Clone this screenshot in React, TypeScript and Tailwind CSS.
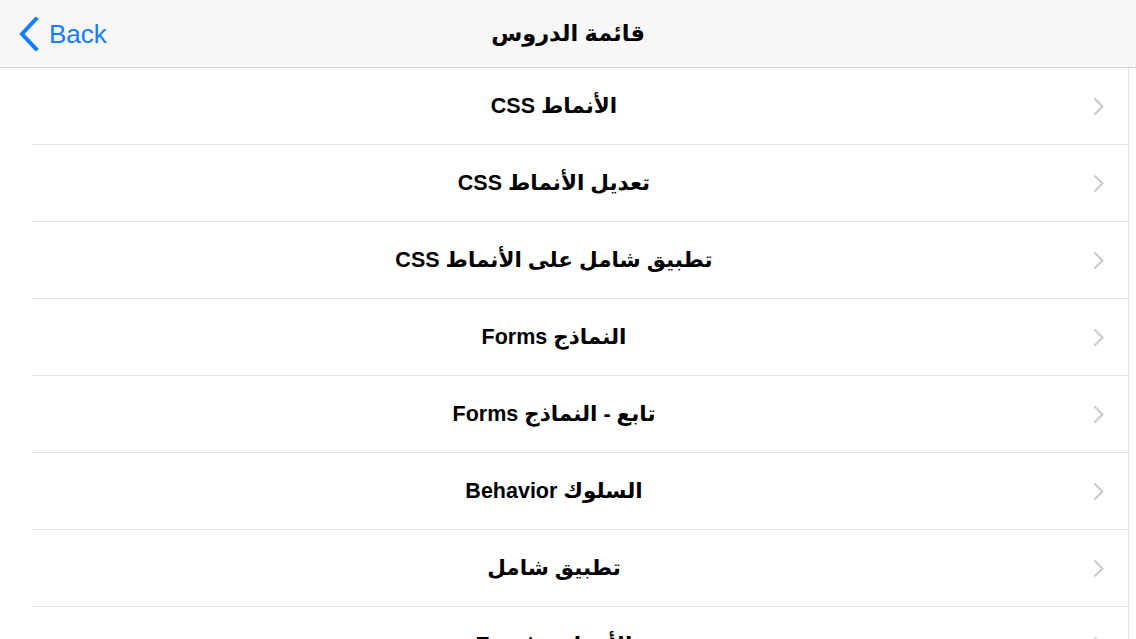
const LESSONS = [
  'الأنماط CSS',
  'تعديل الأنماط CSS',
  'تطبيق شامل على الأنماط CSS',
  'النماذج Forms',
  'تابع - النماذج Forms',
  'السلوك Behavior',
  'تطبيق شامل',
  'الأحداث Events',
];

const FONT = { fontFamily: '"Liberation Sans", "DejaVu Sans", sans-serif' };

function BackChevron() {
  return (
    <svg width="20" height="34" viewBox="0 0 20 34" fill="none">
      <path d="M17 2 L3 17 L17 32" stroke="#157efb" strokeWidth="4" strokeLinecap="square" />
    </svg>
  );
}

function RowChevron() {
  return (
    <svg width="11" height="19" viewBox="0 0 11 19" fill="none">
      <path d="M1.5 1.5 L9.5 9.5 L1.5 17.5" stroke="#c7c7cc" strokeWidth="2" />
    </svg>
  );
}

function LessonRow({ title }: { title: string }) {
  return (
    <div className="ml-8 flex h-[77px] shrink-0 items-center border-b border-[#e2e2e4]">
      <div dir="rtl" className="flex-1 text-center text-[21.5px] font-bold text-black">
        {title}
      </div>
      <div className="flex w-[52px] shrink-0 items-center pl-[17px]">
        <RowChevron />
      </div>
    </div>
  );
}

export default function App() {
  return (
    <div className="flex h-[639px] w-[1136px] flex-col overflow-hidden bg-white" style={FONT}>
      {/* nav bar */}
      <div className="relative flex h-[68px] shrink-0 items-center border-b border-[#d4d4d8] bg-[#f7f7f8]">
        <button className="flex items-center gap-[10px] pl-[19px] text-[26px] text-[#157efb]">
          <BackChevron />
          <span className="leading-none">Back</span>
        </button>
        <div
          dir="rtl"
          className="pointer-events-none absolute inset-x-0 top-0 flex h-full items-center justify-center text-[22.5px] font-bold text-black"
        >
          قائمة الدروس
        </div>
      </div>

      {/* list */}
      <div className="flex flex-1 overflow-hidden">
        <div className="flex w-[1129px] flex-col border-r border-[#e4e4e6]">
          {LESSONS.map((t) => (
            <LessonRow key={t} title={t} />
          ))}
        </div>
        <div className="flex-1 bg-white" />
      </div>
    </div>
  );
}
